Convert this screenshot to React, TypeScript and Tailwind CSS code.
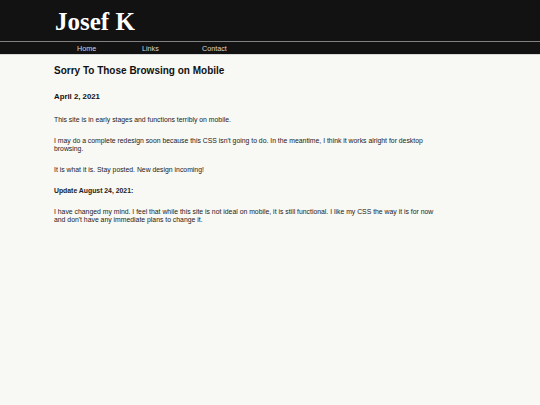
export default function App() {
  return (
    <div className="min-h-[405px] bg-[#f8f8f4] font-['Liberation_Sans',Arial,sans-serif] text-[#111]">
      <header className="bg-[#121212]">
        <div className="h-[41px] pl-[55px] flex items-center">
          <h1 className="font-['Liberation_Serif','Times_New_Roman',serif] font-bold text-[25px] leading-none text-white pt-[2px]">
            Josef K
          </h1>
        </div>
        <nav className="border-t border-[#808080] border-b border-b-[#d8d8d8] h-[14px] flex items-center pt-[2px] pl-[77px] text-[7.2px] text-[#d8d8d8]">
          <a className="w-[65px]">Home</a>
          <a className="w-[60px]">Links</a>
          <a>Contact</a>
        </nav>
      </header>
      <main className="pl-[54px] w-[440px]">
        <h2 className="text-[10px] font-bold pt-[10px] leading-[12px]">Sorry To Those Browsing on Mobile</h2>
        <h3 className="text-[7.8px] font-bold mt-[15px] leading-[10px]">April 2, 2021</h3>
        <div className="text-[6.85px] leading-[8px] text-[#222]">
          <p className="mt-[14px]">This site is in early stages and functions terribly on mobile.</p>
          <p className="mt-[13px]">
            I may do a complete redesign soon because this CSS isn&apos;t going to do. In the meantime, I think it works alright for desktop browsing.
          </p>
          <p className="mt-[13px]">It is what it is. Stay posted. New design incoming!</p>
          <p className="mt-[13px] font-bold">Update August 24, 2021:</p>
          <p className="mt-[13px]">
            I have changed my mind. I feel that while this site is not ideal on mobile, it is still functional. I like my CSS the way it is for now and don&apos;t have any immediate plans to change it.
          </p>
        </div>
      </main>
    </div>
  );
}
